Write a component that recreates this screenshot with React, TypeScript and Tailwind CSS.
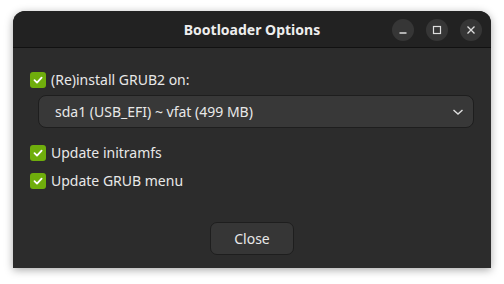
import React from 'react';

const Check: React.FC = () => (
  <span className="flex h-4 w-4 items-center justify-center rounded-[3px] bg-[#6fae0c]">
    <svg width="12" height="12" viewBox="0 0 12 12" fill="none">
      <path d="M2.5 6.2 L5 8.6 L9.6 3.6" stroke="#fff" strokeWidth="1.8" strokeLinecap="round" strokeLinejoin="round" />
    </svg>
  </span>
);

const CheckRow: React.FC<{label: string}> = ({label}) => (
  <label className="flex items-center gap-[5px] text-[14px] text-[#e8e8e8]">
    <Check />
    <span>{label}</span>
  </label>
);

const WinButton: React.FC<{children: React.ReactNode}> = ({children}) => (
  <span className="flex h-[22px] w-[22px] items-center justify-center rounded-full bg-[#363636]">
    {children}
  </span>
);

export default function App() {
  return (
    <div className="h-[284px] w-[504px] bg-white pl-[13px] pt-[11px]" style={{fontFamily: '"Noto Sans", "Open Sans", sans-serif'}}>
      <div className="flex h-[257px] w-[478px] flex-col overflow-hidden rounded-t-[12px] bg-[#2c2c2c] shadow-[0_2px_8px_rgba(0,0,0,0.35)]">
        <div className="relative flex h-[37px] items-center justify-center border-b border-[#111] bg-[#222]">
          <span className="text-[14px] font-bold text-[#eee]">Bootloader Options</span>
          <div className="absolute right-[9px] top-[8px] flex gap-[12px]">
            <WinButton>
              <svg width="10" height="10" viewBox="0 0 10 10"><path d="M1.5 8 H8.5" stroke="#ddd" strokeWidth="1.3" /></svg>
            </WinButton>
            <WinButton>
              <svg width="10" height="10" viewBox="0 0 10 10"><rect x="1.5" y="1.5" width="7" height="7" fill="none" stroke="#ddd" strokeWidth="1.2" /></svg>
            </WinButton>
            <WinButton>
              <svg width="10" height="10" viewBox="0 0 10 10"><path d="M1.5 1.5 L8.5 8.5 M8.5 1.5 L1.5 8.5" stroke="#ddd" strokeWidth="1.3" /></svg>
            </WinButton>
          </div>
        </div>
        <div className="flex flex-1 flex-col px-[17px] pt-[21px]">
          <CheckRow label="(Re)install GRUB2 on:" />
          <div className="ml-[8px] mt-[5px] flex h-[33px] items-center justify-between rounded-[8px] border border-[#1e1e1e] bg-[#383838] pl-[16px] pr-[8px] text-[14px] text-[#e8e8e8]">
            <span>sda1 (USB_EFI) ~ vfat (499 MB)</span>
            <svg width="14" height="14" viewBox="0 0 14 14"><path d="M2.5 5 L7 9 L11.5 5" fill="none" stroke="#ddd" strokeWidth="1.4" /></svg>
          </div>
          <div className="mt-[14px] flex flex-col gap-[7px]">
            <CheckRow label="Update initramfs" />
            <CheckRow label="Update GRUB menu" />
          </div>
          <div className="mt-[31px] flex justify-center">
            <button className="h-[33px] w-[84px] rounded-[7px] border border-[#1e1e1e] bg-[#363636] text-[14px] text-[#e8e8e8]">Close</button>
          </div>
        </div>
      </div>
    </div>
  );
}
